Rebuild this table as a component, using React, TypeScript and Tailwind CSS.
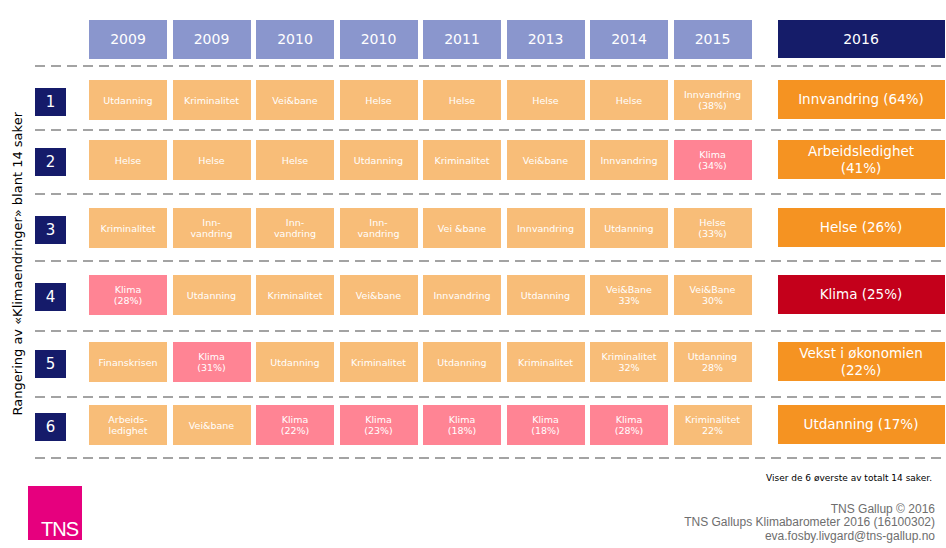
import React from "react";

type Cell = { text: string; pink?: boolean };
type Row = { rank: number; pt: string; cells: Cell[]; main: string; red?: boolean };

const years = ["2009", "2009", "2010", "2010", "2011", "2013", "2014", "2015"];

const rows: Row[] = [
  {
    rank: 1,
    pt: "pt-[13px] pb-[9px]",
    cells: [
      { text: "Utdanning" },
      { text: "Kriminalitet" },
      { text: "Vei&bane" },
      { text: "Helse" },
      { text: "Helse" },
      { text: "Helse" },
      { text: "Helse" },
      { text: "Innvandring\n(38%)" },
    ],
    main: "Innvandring (64%)",
  },
  {
    rank: 2,
    pt: "pt-[9px] pb-[13px]",
    cells: [
      { text: "Helse" },
      { text: "Helse" },
      { text: "Helse" },
      { text: "Utdanning" },
      { text: "Kriminalitet" },
      { text: "Vei&bane" },
      { text: "Innvandring" },
      { text: "Klima\n(34%)", pink: true },
    ],
    main: "Arbeidsledighet\n(41%)",
  },
  {
    rank: 3,
    pt: "pt-[13px] pb-[12px]",
    cells: [
      { text: "Kriminalitet" },
      { text: "Inn-\nvandring" },
      { text: "Inn-\nvandring" },
      { text: "Inn-\nvandring" },
      { text: "Vei &bane" },
      { text: "Innvandring" },
      { text: "Utdanning" },
      { text: "Helse\n(33%)" },
    ],
    main: "Helse (26%)",
  },
  {
    rank: 4,
    pt: "pt-[13px] pb-[15px]",
    cells: [
      { text: "Klima\n(28%)", pink: true },
      { text: "Utdanning" },
      { text: "Kriminalitet" },
      { text: "Vei&bane" },
      { text: "Innvandring" },
      { text: "Utdanning" },
      { text: "Vei&Bane\n33%" },
      { text: "Vei&Bane\n30%" },
    ],
    main: "Klima (25%)",
    red: true,
  },
  {
    rank: 5,
    pt: "pt-[10px] pb-[14px]",
    cells: [
      { text: "Finanskrisen" },
      { text: "Klima\n(31%)", pink: true },
      { text: "Utdanning" },
      { text: "Kriminalitet" },
      { text: "Utdanning" },
      { text: "Kriminalitet" },
      { text: "Kriminalitet\n32%" },
      { text: "Utdanning\n28%" },
    ],
    main: "Vekst i økonomien\n(22%)",
  },
  {
    rank: 6,
    pt: "pt-[7px] pb-[12px]",
    cells: [
      { text: "Arbeids-\nledighet" },
      { text: "Vei&bane" },
      { text: "Klima\n(22%)", pink: true },
      { text: "Klima\n(23%)", pink: true },
      { text: "Klima\n(18%)", pink: true },
      { text: "Klima\n(18%)", pink: true },
      { text: "Klima\n(28%)", pink: true },
      { text: "Kriminalitet\n22%" },
    ],
    main: "Utdanning (17%)",
  },
];

function Dashes() {
  return (
    <div className="h-[2px] w-[908px] bg-[repeating-linear-gradient(to_right,#a3a3a3_0_10px,transparent_10px_16px)]" />
  );
}

export default function App() {
  return (
    <div className="w-[946px] h-[548px] bg-white overflow-hidden font-['DejaVu_Sans',sans-serif]">
      <div className="flex">
        <div className="w-[35px] h-[459px] flex items-center justify-center pt-[69px]">
          <div className="[writing-mode:vertical-rl] rotate-180 text-[13px] text-black whitespace-nowrap">
            Rangering av «Klimaendringer» blant 14 saker
          </div>
        </div>
        <div className="flex flex-col">
          <div className="flex pt-[20px] pb-[6px]">
            <div className="w-[54px]" />
            <div className="flex gap-[5.5px]">
              {years.map((y, i) => (
                <div
                  key={i}
                  className="w-[78px] h-[39px] bg-[#8a96cd] text-white text-[14px] flex items-center justify-center"
                >
                  {y}
                </div>
              ))}
            </div>
            <div className="w-[26px]" />
            <div className="w-[167px] h-[38px] bg-[#151c69] text-white text-[14px] flex items-center justify-center">
              2016
            </div>
          </div>
          {rows.map((r) => (
            <div key={r.rank}>
              <Dashes />
              <div className={"flex " + r.pt}>
                <div className="w-[54px]">
                  <div className="w-[31px] h-[28px] mt-[8px] bg-[#151b6a] text-white text-[15px] flex items-center justify-center">
                    {r.rank}
                  </div>
                </div>
                <div className="flex gap-[5.5px]">
                  {r.cells.map((c, i) => (
                    <div
                      key={i}
                      className={
                        "w-[78px] h-[40px] text-white text-[9.5px] leading-[11px] text-center whitespace-pre-line flex items-center justify-center " +
                        (c.pink ? "bg-[#ff8494]" : "bg-[#f8bd78]")
                      }
                    >
                      {c.text}
                    </div>
                  ))}
                </div>
                <div className="w-[26px]" />
                <div
                  className={
                    "w-[167px] h-[39px] text-white text-[13.5px] leading-[17px] text-center whitespace-pre-line flex items-center justify-center " +
                    (r.red ? "bg-[#c4001b]" : "bg-[#f59322]")
                  }
                >
                  {r.main}
                </div>
              </div>
            </div>
          ))}
          <Dashes />
        </div>
      </div>
      <div className="flex items-start">
        <div className="pl-[28px] pt-[27px]">
          <div className="w-[54px] h-[54px] bg-[#e6007e] flex items-end justify-end pr-[4px] pb-[1px]">
            <span className="text-white text-[20px] leading-[20px] tracking-[-1px] font-['Liberation_Sans',sans-serif]">
              TNS
            </span>
          </div>
        </div>
        <div className="flex-1 flex flex-col items-end pr-[11px]">
          <div className="text-[9px] text-black pt-[13px] pr-[3px]">
            Viser de 6 øverste av totalt 14 saker.
          </div>
          <div className="mt-[17px] text-right text-[12px] leading-[13.5px] text-[#6e6e6e] font-['Liberation_Sans',sans-serif]">
            <div>TNS Gallup © 2016</div>
            <div>TNS Gallups Klimabarometer 2016 (16100302)</div>
            <div>eva.fosby.livgard@tns-gallup.no</div>
          </div>
        </div>
      </div>
    </div>
  );
}
